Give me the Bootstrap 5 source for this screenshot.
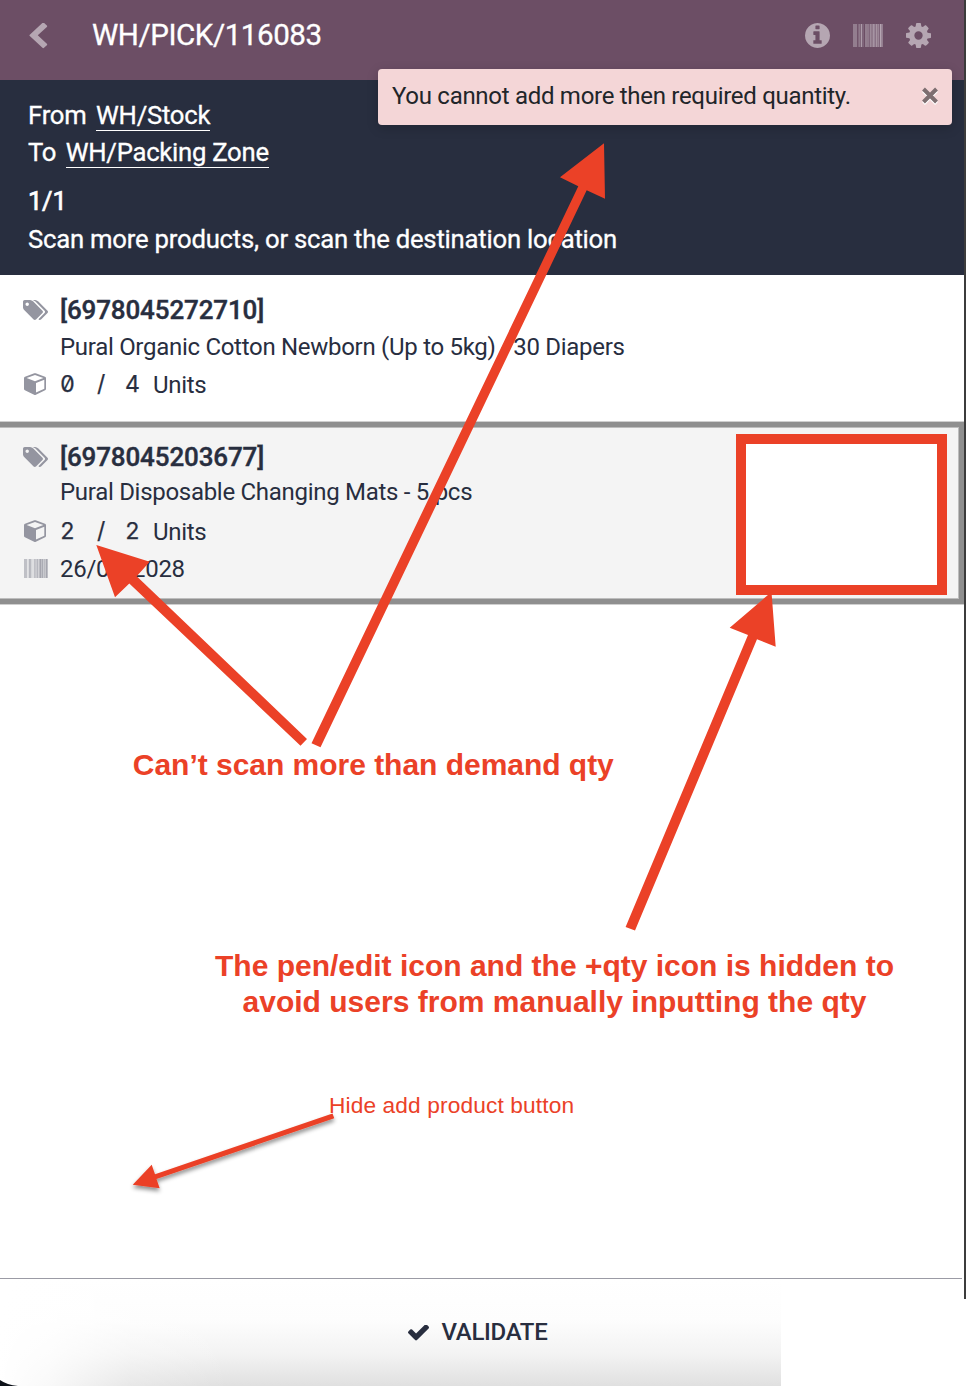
<!DOCTYPE html>
<html lang="en">
<head>
<meta charset="utf-8">
<meta name="viewport" content="width=device-width, initial-scale=1">
<title>WH/PICK/116083</title>
<link href="https://cdn.jsdelivr.net/npm/bootstrap@5.3.0/dist/css/bootstrap.min.css" rel="stylesheet">
<style>
  body { font-family: Roboto, "Liberation Sans", sans-serif; color: #282e3f; background: #fff; height: 1386px; overflow: hidden; font-size: 24px; line-height: 37px; letter-spacing: -.29px; }
  svg { display: block; flex: none; }
  .client { height: 1299px; border-right: 2px solid #3c3c3c; }
  .topbar { height: 80px; padding: 0 33px 9px 29px; background: #6c4e65; }
  .topbar .tint { color: #b5a6b2; }
  .doc-name { font-size: 29.6px; margin-left: 44px; letter-spacing: -.46px; -webkit-text-stroke: .3px #fff; }
  .summary { height: 195px; background: #282e3f; padding: 17px 28px 0; font-size: 25.7px; letter-spacing: -.23px; -webkit-text-stroke: .3px #fff; }
  .place { border-bottom: 1px solid #fff; line-height: 30px; margin-left: 9.5px; height: 31px; letter-spacing: -.27px; }
  .progress-count { margin-top: 12px; font-size: 25.5px; -webkit-text-stroke: .7px #fff; }
  .hint { padding-top: 1px; }
  .toast-note { left: 378px; top: 69px; width: 574px; height: 56px; background: #f4d6d7; color: #212529; border-radius: 4px; padding: 0 13px 2px 14px; font-size: 24px; letter-spacing: -.29px; box-shadow: 0 3px 12px rgba(0,0,0,.18); }
  .move { padding: 17px 0 0 23px; }
  .move-first { height: 146px; }
  .move-selected { height: 184px; border: 1px solid #cfcfcf; border-width: 1px 0; }
  .move-inner { height: 182px; border: solid #8f8f8f; border-width: 5px 5px 5px 0; background: #f4f4f4; box-shadow: inset -1px 1px #bdbdbd, inset 0 -1px #bdbdbd; padding: 12px 0 0 23px; }
  .line-row { height: 37px; }
  .glyph { width: 37px; color: #9495a0; flex: none; padding-bottom: 1px; }
  .code { font-size: 26px; font-weight: 500; letter-spacing: -.14px; -webkit-text-stroke: .4px #282e3f; }
  .figure-qty { font-family: Inter, sans-serif; font-feature-settings: "zero", "tnum"; font-size: 23px; height: 37px; line-height: 36px; letter-spacing: 0; -webkit-text-stroke: .25px #282e3f; }
  .unit { padding-top: 2px; }
  .footer-bar { margin-top: -21px; height: 108px; }
  .footer-rule { height: 1px; width: 962px; background: #9b9ba5; }
  .validate { width: 781px; height: 107px; padding-left: 408px; font-weight: 500; letter-spacing: -.3px; background: linear-gradient(90deg, #fff 0, rgba(255,255,255,.8) 50px, rgba(255,255,255,.25) 130px, rgba(255,255,255,0) 230px), linear-gradient(#fff 0, #fdfdfd 38%, #f3f3f3 70%, #e0e0e0 100%); }
  .marks { left: 0; top: 0; pointer-events: none; }
  .marks text { font-family: "Liberation Sans", Arial, sans-serif; fill: #eb4127; letter-spacing: 0; }
</style>
<script src="https://cdn.jsdelivr.net/npm/bootstrap@5.3.0/dist/js/bootstrap.bundle.min.js"></script>
</head>
<body class="position-relative">

<svg width="0" height="0" class="position-absolute" aria-hidden="true">
  <symbol id="tags" viewBox="0 128 1899 1515"><path fill="currentColor" d="M448 448q0-53-37.500-90.500t-90.500-37.500-90.500 37.500-37.500 90.500 37.500 90.500 90.500 37.500 90.500-37.500 37.500-90.500zm1067 576q0 53-37 90l-491 492q-39 37-91 37-53 0-90-37l-715-716q-38-37-64.500-101t-26.500-117v-416q0-52 38-90t90-38h416q53 0 117 26.500t102 64.500l715 714q37 39 37 91zm384 0q0 53-37 90l-491 492q-39 37-91 37-36 0-59-14t-53-45l470-470q37-37 37-90 0-52-37-91l-715-714q-38-38-102-64.500t-117-26.500h224q53 0 117 26.500t102 64.500l715 714q37 39 37 91z"/></symbol>
  <symbol id="cube" viewBox="0 0 22 22"><path fill="currentColor" fill-rule="evenodd" d="M10.300.3Q11 0 11.700.3L21 3.700Q22 4.100 22 5.200V15.800Q22 16.800 21.100 17.300L11.900 21.700Q11 22.200 10.100 21.700L.9 17.300Q0 16.800 0 15.800V5.200Q0 4.100 1 3.700ZM11 2 2.600 5.100 11 8.300 19.400 5.100ZM12 10V19.600L20.300 15.700V6.800Z"/></symbol>
  <symbol id="bars" viewBox="0 0 30 23" preserveAspectRatio="none"><g fill="currentColor"><path opacity=".55" d="M0 0h4v23H0zM9.500 0h1v23h-1zM12 0h2v23h-2zM21 0h1.500v23H21zM25.500 0h1v23h-1zM28.500 0H30v23h-1.500z"/><path opacity=".4" d="M4.800 0h1v23h-1zM15 0h1v23h-1z"/><path d="M6.500 0h.8v23h-.8zM8 0h.9v23H8zM14.500 0h.7v23h-.7zM16.700 0h1v23h-1zM18.500 0h1v23h-1zM20.200 0h1v23h-1zM22.800 0h1v23h-1zM24.500 0h1v23h-1zM27 0h1.500v23H27z"/></g></symbol>
</svg>

<main class="client">
  <header class="topbar d-flex align-items-center text-white">
    <svg class="tint" width="19" height="26" viewBox="384 52 1110 1640" preserveAspectRatio="none"><path fill="currentColor" d="M1427 301l-531 531 531 531q19 19 19 45t-19 45l-166 166q-19 19-45 19t-45-19l-742-742q-19-19-19-45t19-45l742-742q19-19 45-19t45 19l166 166q19 19 19 45t-19 45z"/></svg>
    <span class="doc-name">WH/PICK/116083</span>
    <div class="tint ms-auto d-flex align-items-center">
      <svg width="25" height="25" viewBox="128 128 1536 1536"><path fill="currentColor" d="M1152 1376v-160q0-14-9-23t-23-9h-96v-512q0-14-9-23t-23-9h-320q-14 0-23 9t-9 23v160q0 14 9 23t23 9h96v320h-96q-14 0-23 9t-9 23v160q0 14 9 23t23 9h448q14 0 23-9t9-23zm-128-896v-160q0-14-9-23t-23-9h-192q-14 0-23 9t-9 23v160q0 14 9 23t23 9h192q14 0 23-9t9-23zm640 416q0 209-103 385.500t-279.500 279.500-385.500 103-385.500-103-279.500-279.500-103-385.500 103-385.500 279.500-279.500 385.500-103 385.500 103 279.500 279.500 103 385.500z"/></svg>
      <svg width="30" height="23" style="margin:0 23px"><use href="#bars"/></svg>
      <svg width="25" height="25" viewBox="128 128 1536 1536"><path fill="currentColor" d="M1152 896q0-106-75-181t-181-75-181 75-75 181 75 181 181 75 181-75 75-181zm512-109v222q0 12-8 23t-20 13l-185 28q-19 54-39 91 35 50 107 138 10 12 10 25t-9 23q-27 37-99 108t-94 71q-12 0-26-9l-138-108q-44 23-91 38-16 136-29 186-7 28-36 28h-222q-14 0-24.500-8.500t-11.500-21.500l-28-184q-49-16-90-37l-141 107q-10 9-25 9-14 0-25-11-126-114-165-168-7-10-7-23 0-12 8-23 15-21 51-66.500t54-70.500q-27-50-41-99l-183-27q-13-2-21-12.500t-8-23.500v-222q0-12 8-23t19-13l186-28q14-46 39-92-40-57-107-138-10-12-10-24 0-10 9-23 26-36 98.500-107.500t94.500-71.500q13 0 26 10l138 107q44-23 91-38 16-136 29-186 7-28 36-28h222q14 0 24.500 8.500t11.500 21.500l28 184q49 16 90 37l142-107q9-9 24-9 13 0 25 10 129 119 165 170 7 8 7 22 0 12-8 23-15 21-51 66.500t-54 70.500q26 50 41 98l183 28q13 2 21 12.500t8 23.500z"/></svg>
    </div>
  </header>

  <section class="summary text-white">
    <div class="d-flex align-items-center line-row"><span>From</span><span class="place">WH/Stock</span></div>
    <div class="d-flex align-items-center line-row"><span>To</span><span class="place">WH/Packing Zone</span></div>
    <div class="progress-count">1/1</div>
    <div class="hint">Scan more products, or scan the destination location</div>
  </section>

  <section class="move move-first">
    <div class="d-flex align-items-center line-row"><span class="glyph"><svg width="25" height="20"><use href="#tags"/></svg></span><span class="code">[6978045272710]</span></div>
    <div class="d-flex align-items-center line-row"><span class="glyph"></span><span class="product">Pural Organic Cotton Newborn (Up to 5kg) - 30 Diapers</span></div>
    <div class="d-flex align-items-center line-row"><span class="glyph"><svg width="24" height="22"><use href="#cube"/></svg></span><span class="figure-qty" style="width:37px">0</span><span class="figure-qty" style="width:28px">/</span><span class="figure-qty" style="width:28px">4</span><span class="unit">Units</span></div>
  </section>

  <section class="move-selected">
    <div class="move-inner">
      <div class="d-flex align-items-center line-row"><span class="glyph"><svg width="25" height="20"><use href="#tags"/></svg></span><span class="code">[6978045203677]</span></div>
      <div class="d-flex align-items-center line-row"><span class="glyph"></span><span class="product pb-1">Pural Disposable Changing Mats - 5 pcs</span></div>
      <div class="d-flex align-items-center line-row"><span class="glyph"><svg width="24" height="22"><use href="#cube"/></svg></span><span class="figure-qty" style="width:37px">2</span><span class="figure-qty" style="width:28px">/</span><span class="figure-qty" style="width:28px">2</span><span class="unit">Units</span></div>
      <div class="d-flex align-items-center line-row"><span class="glyph"><svg width="25" height="19" viewBox="-1 0 25 19"><use href="#bars" width="24" height="19"/></svg></span><span class="expiry" style="padding-top:2px">26/02/2028</span></div>
    </div>
  </section>
</main>

<footer class="footer-bar">
  <div class="footer-rule"></div>
  <div class="validate d-flex align-items-center">
    <svg width="21" height="16" viewBox="121 384 1550 1180" preserveAspectRatio="none"><path fill="currentColor" d="M1671 566q0 40-28 68l-724 724-136 136q-28 28-68 28t-68-28l-136-136-362-362q-28-28-28-68t28-68l136-136q28-28 68-28t68 28l294 295 656-657q28-28 68-28t68 28l136 136q28 28 28 68z"/></svg>
    <span class="validate-label" style="margin-left:12.500px">VALIDATE</span>
  </div>
</footer>

<div class="toast-note position-absolute d-flex align-items-center justify-content-between">
  <span class="toast-text">You cannot add more then required quantity.</span>
  <svg width="18" height="18" viewBox="0 0 18 18" fill="none" stroke-width="4"><path stroke="#fff" d="M2.500 3.500 15.500 16.500M15.500 3.500 2.500 16.500"/><path stroke="#7d6e70" d="M2.500 2 15.500 15M15.500 2 2.500 15"/></svg>
</div>

<!-- Review annotations drawn over the screen -->
<svg class="marks position-absolute" width="966" height="1386" viewBox="0 0 966 1386">
  <defs><filter id="drop" x="-20%" y="-20%" width="140%" height="150%"><feDropShadow dx="0" dy="3" stdDeviation="2" flood-opacity=".45"/></filter></defs>
  <path fill="#0c1118" d="M0 1380Q7 1385 18 1386H0Z"/>
  <rect x="741" y="439" width="201" height="151" fill="#fff" stroke="#eb4127" stroke-width="10"/>
  <g fill="#eb4127">
    <path d="M96.300 545 149.700 561.700 136.700 576.300 307 739 300.500 745.700 129.300 583.500 115 597.300Z"/>
    <path d="M604 143.300 605 198.700 586.700 190.300 320.500 747.300 311.500 743.300 578.300 186.300 560 177.300Z"/>
    <path d="M771.500 592 775.700 646.700 757 639.300 635 930.500 625.600 927 748 635 729.700 627.700Z"/>
    <path filter="url(#drop)" d="M132.700 1184.700 151.700 1164.700 155 1174.300 332.500 1113.500 334.300 1118.300 156.500 1179 159.700 1188.300Z"/>
  </g>
  <text x="132.800" y="775" font-size="30" font-weight="700" textLength="481">Can’t scan more than demand qty</text>
  <text x="215" y="976" font-size="30" font-weight="700" textLength="679">The pen/edit icon and the +qty icon is hidden to</text>
  <text x="242.500" y="1012" font-size="30" font-weight="700" textLength="624">avoid users from manually inputting the qty</text>
  <text x="329" y="1113" font-size="22.700" textLength="245">Hide add product button</text>
</svg>
</body>
</html>
